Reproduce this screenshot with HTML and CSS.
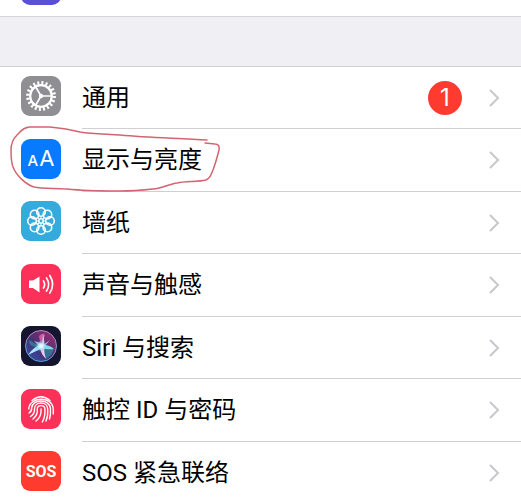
FILE: index.html
```html
<!DOCTYPE html>
<html lang="zh-CN">

<head>
    <meta charset="UTF-8">
    <meta name="viewport" content="width=device-width, initial-scale=1.0">
    <title>设置</title>
    <link rel="stylesheet" href="styles.css">
</head>

<body>
    <div class="previous">
        <span class="icon purple"></span>
    </div>

    <ul class="settings">
        <li class="row">
            <svg class="icon gray" viewBox="0 0 40 40">
                <circle cx="20" cy="20" r="13.2" fill="none" stroke="#fff" stroke-width="3.4" stroke-dasharray="2 2.147" />
                <circle cx="20" cy="20" r="10.8" fill="none" stroke="#fff" stroke-width="2.2" />
                <circle cx="20" cy="20" r="2.2" fill="#fff" />
                <path d="M20 20H31M20 20L14.5 10.5M20 20L14.5 29.5" stroke="#fff" stroke-width="1.7" />
            </svg>
            <a class="link" href="#">
                <span class="name">通用</span>
                <span class="badge">1</span>
                <svg class="chevron" viewBox="0 0 12 20"><path d="M2 2l8 8-8 8" /></svg>
            </a>
        </li>
        <li class="row">
            <span class="icon blue"><span class="small-a">A</span><span class="big-a">A</span></span>
            <a class="link" href="#">
                <span class="name">显示与亮度</span>
                <svg class="chevron" viewBox="0 0 12 20"><path d="M2 2l8 8-8 8" /></svg>
            </a>
            <!-- hand-drawn ring around this row -->
            <svg class="ring" viewBox="0 120 230 80">
                <path d="M207 140C180 138 150 138 120 135C105 134 92 134 80 132C68 129 60 128 50 127L30 127C24 127 21 131 17 135C12 140 11 146 11 150C11 157 11 162 13 167C16 175 25 184 34 187C43 189 54 188 67 189C85 191 102 191 120 191C132 191 144 190 153 189C163 188 169 184 177 183C186 181 197 182 206 180C211 178 211 174 213 170C216 162 218 154 219 150C220 146 218 144 215 144L205 143" />
            </svg>
        </li>
        <li class="row">
            <svg class="icon cyan" viewBox="0 0 40 40">
                <g fill="none" stroke="#fff" stroke-width="1.6">
                    <circle cx="20" cy="11" r="4.3" />
                    <circle cx="26.4" cy="13.6" r="4.3" />
                    <circle cx="29" cy="20" r="4.3" />
                    <circle cx="26.4" cy="26.4" r="4.3" />
                    <circle cx="20" cy="29" r="4.3" />
                    <circle cx="13.6" cy="26.4" r="4.3" />
                    <circle cx="11" cy="20" r="4.3" />
                    <circle cx="13.6" cy="13.6" r="4.3" />
                    <circle cx="20" cy="20" r="2.2" />
                    <path d="M20 15V18M20 22V25M15 20H18M22 20H25M16.5 16.5L18.5 18.5M21.5 21.5L23.5 23.5M23.5 16.5L21.5 18.5M18.5 21.5L16.5 23.5" stroke-width="1" />
                </g>
            </svg>
            <a class="link" href="#">
                <span class="name">墙纸</span>
                <svg class="chevron" viewBox="0 0 12 20"><path d="M2 2l8 8-8 8" /></svg>
            </a>
        </li>
        <li class="row">
            <svg class="icon pink" viewBox="0 0 40 40">
                <path d="M8 16.5H12L18.5 12.5V28.5L12 24H8Z" fill="#fff" />
                <g fill="none" stroke="#fff" stroke-width="1.7" stroke-linecap="round">
                    <path d="M22.5 17Q24.8 20.5 22.5 24" />
                    <path d="M25.5 14Q29.8 20.5 25.5 27" />
                    <path d="M28.8 11.5Q34.5 20.5 28.8 29" />
                </g>
            </svg>
            <a class="link" href="#">
                <span class="name">声音与触感</span>
                <svg class="chevron" viewBox="0 0 12 20"><path d="M2 2l8 8-8 8" /></svg>
            </a>
        </li>
        <li class="row">
            <svg class="icon navy" viewBox="0 0 40 40">
                <defs>
                    <linearGradient id="orb" x1="0" y1="1" x2="1" y2="0">
                        <stop offset="0" stop-color="#2b55b8" />
                        <stop offset="0.45" stop-color="#47306f" />
                        <stop offset="1" stop-color="#a82c72" />
                    </linearGradient>
                    <linearGradient id="edge" x1="0" y1="0" x2="0" y2="1">
                        <stop offset="0" stop-color="#b889c0" />
                        <stop offset="1" stop-color="#4ba5d8" />
                    </linearGradient>
                    <radialGradient id="glow">
                        <stop offset="0" stop-color="#fff" />
                        <stop offset="0.4" stop-color="#c9f2ff" stop-opacity="0.8" />
                        <stop offset="1" stop-color="#45b7dc" stop-opacity="0" />
                    </radialGradient>
                </defs>
                <circle cx="20" cy="20" r="15.5" fill="url(#orb)" stroke="url(#edge)" stroke-width="1" />
                <path d="M20 21L8 14Q7 22 20 21Z" fill="#2f9fa9" opacity="0.6" />
                <path d="M20 21L25 33Q31 30 33 23Z" fill="#279bb2" opacity="0.6" />
                <path d="M20 21L18 10Q22 6 24 9Z" fill="#dc66b0" opacity="0.8" />
                <path d="M21 18Q12 21 7 29Q15 25 22 22Z" fill="#a9e2fa" />
                <path d="M19 19Q27 18 33 23Q26 24 19 22Z" fill="#78e2df" />
                <path d="M20 20Q22 14 22 8Q24 17 23 21Q23 27 25 33Q20 28 19 22Z" fill="#f0c7ed" />
                <path d="M18 20L13 15Q19 16 22 19L29 14L23 21Z" fill="#c6e5ff" opacity="0.7" />
                <circle cx="20" cy="20" r="6" fill="url(#glow)" />
            </svg>
            <a class="link" href="#">
                <span class="name">Siri 与搜索</span>
                <svg class="chevron" viewBox="0 0 12 20"><path d="M2 2l8 8-8 8" /></svg>
            </a>
        </li>
        <li class="row">
            <svg class="icon pink" viewBox="0 0 40 40">
                <g fill="none" stroke="#fff" stroke-width="1.4" stroke-linecap="round">
                    <path d="M11 11.5Q20 4 29 11.5" />
                    <path d="M7.8 20C8 8 31 6 32.3 20V25" />
                    <path d="M8 24Q11 22 10.6 19C11.5 9.5 29 9.5 29.5 20Q29.8 26 28.5 30" />
                    <path d="M9.5 27.5Q14 24.5 13.5 20C13.5 12 26.5 12 26.7 20Q27.2 27 25 32" />
                    <path d="M12 30Q17 26 16.3 20C16.3 15.5 23.8 15.5 23.9 20Q24.4 28 21.3 33" />
                    <path d="M15 32Q20.5 28 20.1 20" />
                </g>
            </svg>
            <a class="link" href="#">
                <span class="name">触控 ID 与密码</span>
                <svg class="chevron" viewBox="0 0 12 20"><path d="M2 2l8 8-8 8" /></svg>
            </a>
        </li>
        <li class="row">
            <span class="icon red">SOS</span>
            <a class="link" href="#">
                <span class="name">SOS 紧急联络</span>
                <svg class="chevron" viewBox="0 0 12 20"><path d="M2 2l8 8-8 8" /></svg>
            </a>
        </li>
    </ul>
</body>

</html>
```
FILE: styles.css
```css
* {
    box-sizing: border-box;
}

body {
    margin: 0;
    background: #efeff4;
    color: #000;
    font-family: Roboto, "Noto Sans CJK SC", sans-serif;
    font-size: 24px;
}

.previous {
    display: flex;
    align-items: flex-end;
    height: 17px;
    padding: 0 21px 11px;
    background: #fff;
    border-bottom: 1px solid #d5d5da;
}

.settings {
    list-style: none;
    margin: 49px 0 0;
    padding: 0;
    background: #fff;
    border-top: 1px solid #d0d0d3;
}

.row {
    position: relative;
    display: flex;
    align-items: center;
    gap: 21px;
    height: 62px;
    padding-left: 21px;
}

.row:nth-child(even) {
    height: 63px;
}

.icon {
    display: flex;
    align-items: center;
    justify-content: center;
    flex: none;
    width: 40px;
    height: 40px;
    margin-bottom: 4px;
    border-radius: 9px;
    color: #fff;
}

.previous .icon {
    margin-bottom: 0;
}

.purple {
    background: #5a50d5;
}

.gray {
    background: #8e8e93;
}

.blue {
    align-items: baseline;
    gap: 1px;
    background: #087aff;
    font-family: Inter, sans-serif;
    line-height: 38px;
}

.small-a {
    font-size: 15px;
    font-weight: 500;
}

.big-a {
    font-size: 22px;
}

.cyan {
    background: #35aadc;
}

.pink {
    background: #fc3159;
}

.navy {
    background: #15152f;
}

.red {
    background: #ff3b30;
    font-size: 16px;
    font-weight: 700;
}

.link {
    display: flex;
    align-items: center;
    flex: 1;
    height: 100%;
    padding-right: 21px;
    border-bottom: 1px solid #d0d0d3;
    color: inherit;
    text-decoration: none;
}

.row:last-child .link {
    border-bottom: none;
}

.name {
    flex: 1;
    line-height: 36px;
}

.badge {
    width: 34px;
    height: 34px;
    margin-right: 26px;
    border-radius: 50%;
    background: #ff3b30;
    color: #fff;
    font-family: Inter, sans-serif;
    line-height: 34px;
    text-align: center;
}

.chevron {
    width: 12px;
    height: 20px;
    fill: none;
    stroke: #c7c7cc;
    stroke-width: 2;
}

.ring {
    position: absolute;
    top: -9px;
    left: 0;
    width: 230px;
    height: 80px;
    fill: none;
    stroke: #d46470;
    stroke-width: 1.5;
    stroke-linecap: round;
    pointer-events: none;
}
```
